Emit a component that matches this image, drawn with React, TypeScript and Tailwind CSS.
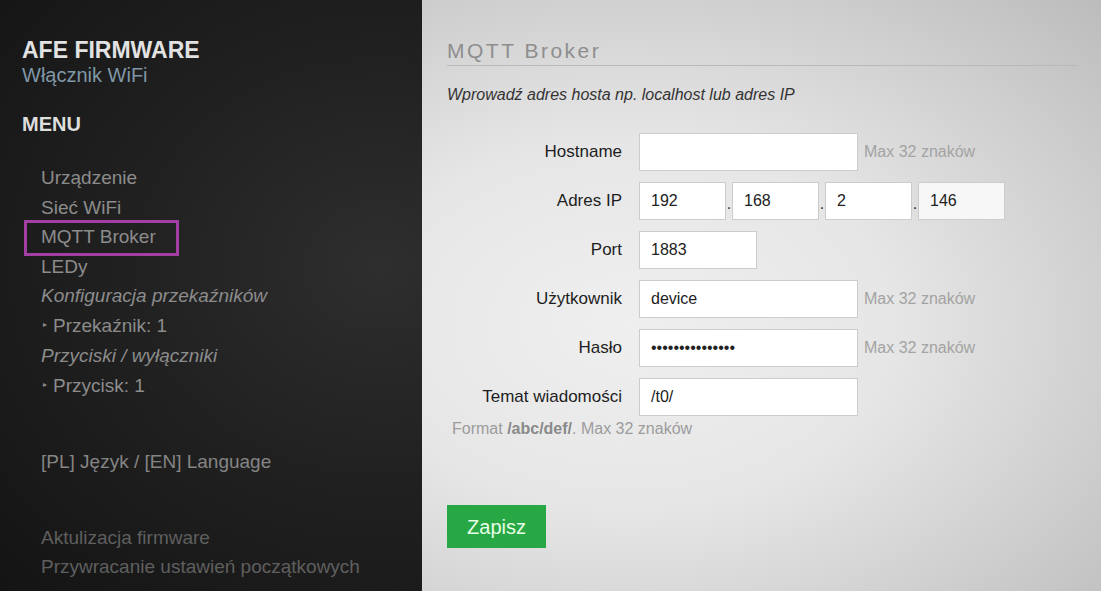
import React from "react";

const menuMain = ["Urządzenie", "Sieć WiFi", "MQTT Broker", "LEDy"];

const Field: React.FC<{ label: string; children: React.ReactNode }> = ({ label, children }) => (
  <div className="flex items-center h-[38px]">
    <label className="w-[175px] text-right text-[17px] text-[#1e1e1e]">{label}</label>
    <div className="ml-[17px] flex items-center h-full">{children}</div>
  </div>
);

const Input: React.FC<{ value?: string; width: string; bg?: string }> = ({ value = "", width, bg }) => (
  <input
    readOnly
    value={value}
    className={`${width} h-[38px] border border-[#cccccc] ${bg ?? "bg-white"} px-[11px] text-[16px] text-[#222] outline-none`}
  />
);

const Hint = () => <span className="ml-[6px] text-[16px] text-[#a3a3a3]">Max 32 znaków</span>;

const Dot = () => <span className="w-[6px] text-center text-[16px] text-[#333] self-end pb-[8px] leading-none">.</span>;

export default function App() {
  return (
    <div className="flex w-full h-[591px] overflow-hidden font-['Liberation_Sans',Arial,sans-serif]">
      {/* menu */}
      <aside className="w-[422px] shrink-0 pl-[22px] pt-[37px] bg-[radial-gradient(ellipse_at_90%_45%,#2e2e2e_0%,#212121_45%,#141414_100%)]">
        <h1 className="text-[23px] leading-[26px] font-bold text-[#e2e2e2]">AFE FIRMWARE</h1>
        <p className="text-[20px] leading-[24px] text-[#7f97a6]">Włącznik WiFi</p>
        <h2 className="mt-[25px] text-[20px] leading-[24px] font-bold text-[#dedede]">MENU</h2>

        <ul className="mt-[27px] pl-[19px] text-[19px] leading-[29.5px] text-[#8c8c8c]">
          {menuMain.map((m) => (
            <li key={m}>
              {m === "MQTT Broker" ? (
                <span className="relative inline-block">
                  {m}
                  <span className="absolute -left-[17px] -right-[23px] -top-[2px] -bottom-[4px] border-[3px] border-[#a23ea4]" />
                </span>
              ) : (
                m
              )}
            </li>
          ))}
          <li className="italic">Konfiguracja przekaźników</li>
          <li>
            <span className="inline-block w-[12px] text-[8px] align-middle relative -top-[2px] pl-[2px]">▸</span>
            Przekaźnik: 1
          </li>
          <li className="italic">Przyciski / wyłączniki</li>
          <li>
            <span className="inline-block w-[12px] text-[8px] align-middle relative -top-[2px] pl-[2px]">▸</span>
            Przycisk: 1
          </li>
        </ul>

        <p className="mt-[46px] pl-[19px] text-[19px] leading-[29.5px] text-[#858585]">[PL] Język / [EN] Language</p>

        <ul className="mt-[46px] pl-[19px] text-[19px] leading-[29.5px] text-[#5f5f5f]">
          <li>Aktulizacja firmware</li>
          <li>Przywracanie ustawień początkowych</li>
        </ul>
      </aside>

      {/* content */}
      <main className="flex-1 pl-[25px] pr-[24px] pt-[37px] bg-[radial-gradient(ellipse_at_30%_55%,#efefef_0%,#e6e6e6_40%,#bcbcbc_100%)]">
        <h2 className="text-[21px] leading-[28px] tracking-[2.5px] text-[#8e8e8e] border-b border-[#b9b9b9]">MQTT Broker</h2>
        <p className="mt-[19px] text-[16px] leading-[20px] italic text-[#333]">
          Wprowadź adres hosta np. localhost lub adres IP
        </p>

        <div className="mt-[28px] flex flex-col gap-[11px]">
          <Field label="Hostname">
            <Input width="w-[219px]" />
            <Hint />
          </Field>
          <Field label="Adres IP">
            <Input width="w-[87px]" value="192" />
            <Dot />
            <Input width="w-[87px]" value="168" />
            <Dot />
            <Input width="w-[87px]" value="2" />
            <Dot />
            <Input width="w-[87px]" value="146" bg="bg-[#f7f7f7]" />
          </Field>
          <Field label="Port">
            <Input width="w-[118px]" value="1883" />
          </Field>
          <Field label="Użytkownik">
            <Input width="w-[219px]" value="device" />
            <Hint />
          </Field>
          <Field label="Hasło">
            <Input width="w-[219px]" value="•••••••••••••••" />
            <Hint />
          </Field>
          <Field label="Temat wiadomości">
            <Input width="w-[219px]" value="/t0/" />
          </Field>
        </div>

        <p className="mt-[3px] pl-[5px] text-[16px] leading-[20px] text-[#9c9c9c]">
          Format <b className="text-[#8a8a8a]">/abc/def/</b>. Max 32 znaków
        </p>

        <button className="mt-[66px] w-[99px] h-[43px] bg-[#28a745] text-[20px] text-[#e6ffe6]">Zapisz</button>
      </main>
    </div>
  );
}
